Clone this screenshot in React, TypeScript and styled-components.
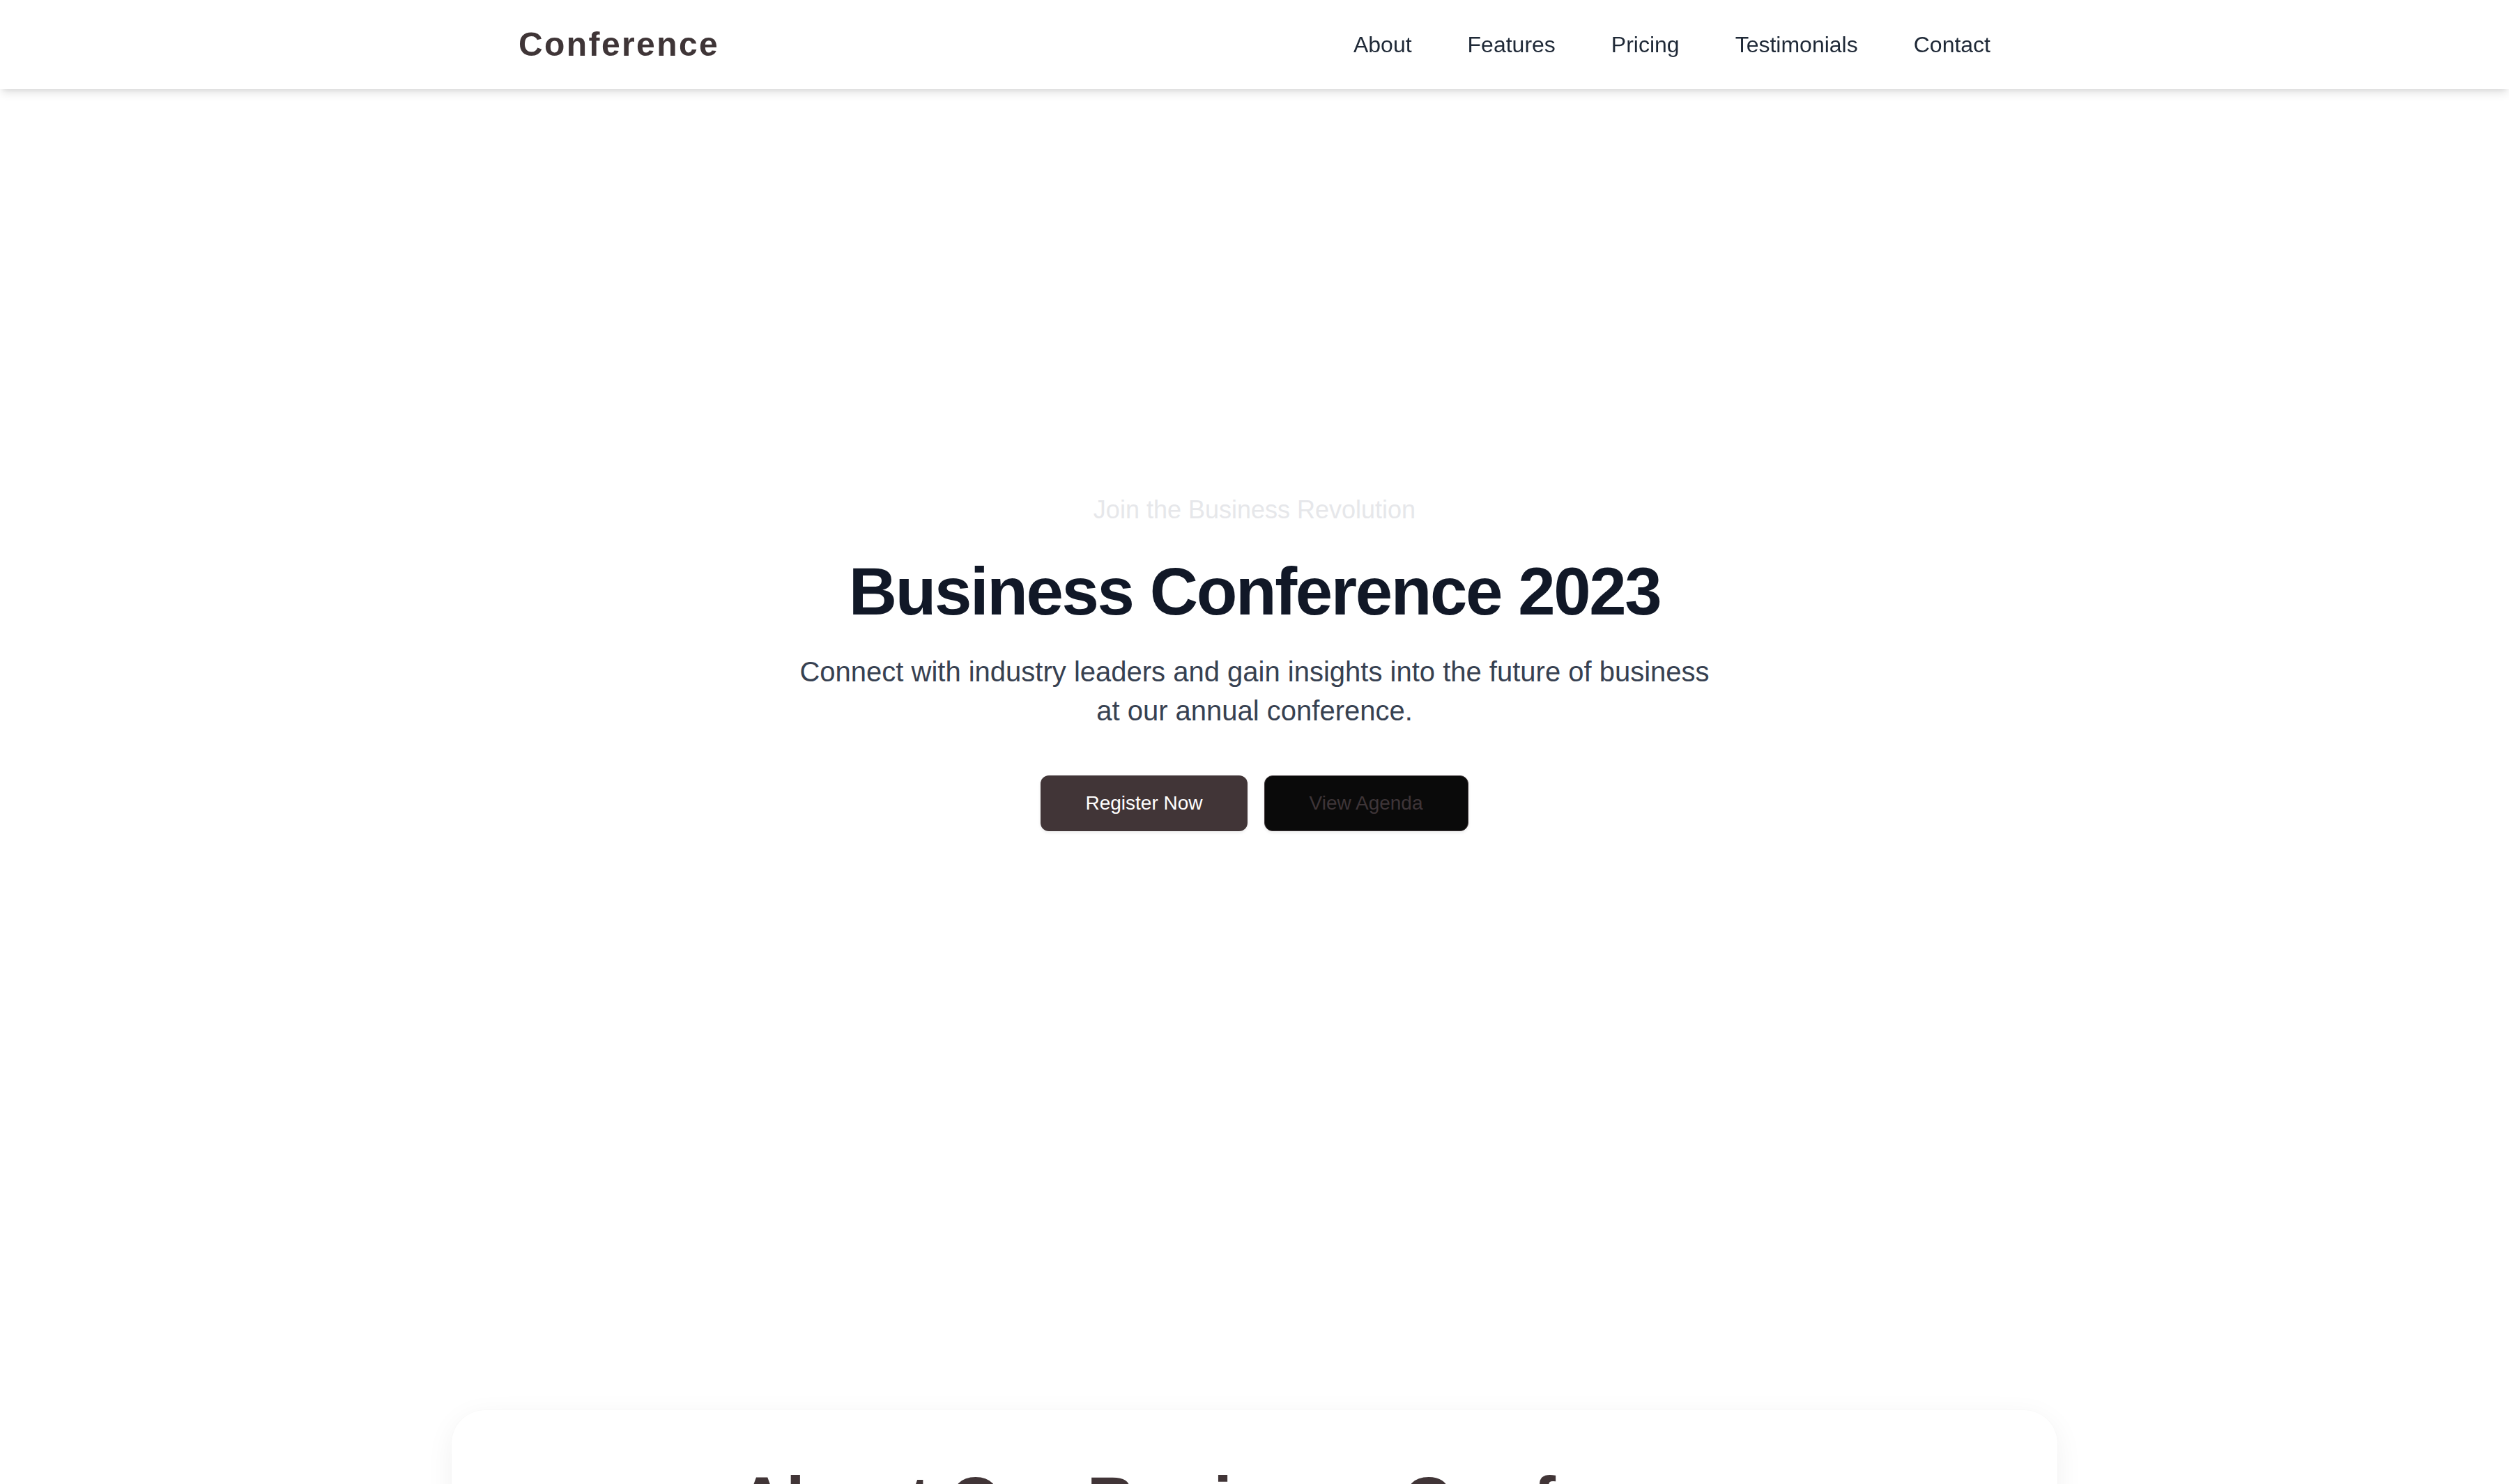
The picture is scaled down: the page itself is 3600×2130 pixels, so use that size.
import React from "react";
import styled, { createGlobalStyle } from "styled-components";

const GlobalStyle = createGlobalStyle`
  *, *::before, *::after { box-sizing: border-box; }
  html, body { margin: 0; padding: 0; background: #ffffff; }
  body {
    font-family: "Liberation Sans", Arial, Helvetica, sans-serif;
    color: #1f2937;
    -webkit-font-smoothing: antialiased;
  }
`;

const NavBar = styled.header`
  position: fixed;
  top: 0;
  left: 0;
  right: 0;
  z-index: 10;
  height: 128px;
  background: #ffffff;
  box-shadow: 0 8px 12px -2px rgba(0, 0, 0, 0.1), 0 4px 8px -4px rgba(0, 0, 0, 0.1);
`;

const NavInner = styled.div`
  max-width: 2304px;
  height: 100%;
  margin: 0 auto;
  padding: 0 96px;
  display: flex;
  align-items: center;
  justify-content: space-between;
`;

const Logo = styled.a`
  font-size: 48px;
  line-height: 64px;
  font-weight: 700;
  letter-spacing: 0.05em;
  color: #3f3537;
  text-decoration: none;
`;

const NavLinks = styled.nav`
  display: flex;
  align-items: center;
  gap: 80px;
`;

const NavLink = styled.a`
  font-size: 32px;
  line-height: 48px;
  color: #1f2937;
  text-decoration: none;
`;

const Hero = styled.section`
  min-height: 1896px;
  display: flex;
  align-items: center;
  justify-content: center;
  text-align: center;
`;

const HeroContent = styled.div`
  display: flex;
  flex-direction: column;
  align-items: center;
`;

const Eyebrow = styled.p`
  margin: 0 0 41px;
  font-size: 36px;
  line-height: 56px;
  color: #e6e7ea;
`;

const Title = styled.h1`
  margin: 0 0 39px;
  font-size: 96px;
  line-height: 96px;
  font-weight: 700;
  letter-spacing: -0.025em;
  color: #111827;
`;

const Lead = styled.p`
  margin: 0 0 65px;
  max-width: 1344px;
  font-size: 40px;
  line-height: 56px;
  color: #374151;
`;

const Actions = styled.div`
  display: flex;
  gap: 24px;
`;

const Button = styled.a<{ $variant: "primary" | "dark" }>`
  display: inline-flex;
  align-items: center;
  justify-content: center;
  height: 80px;
  padding: 0 64px;
  border-radius: 12px;
  font-size: 28px;
  line-height: 40px;
  text-decoration: none;
  background: ${(p) => (p.$variant === "primary" ? "#413537" : "#0a0a0a")};
  color: ${(p) => (p.$variant === "primary" ? "#ffffff" : "#3e3538")};
  border: ${(p) => (p.$variant === "primary" ? "none" : "1.5px solid #3f3639")};
  box-shadow: 0 2px 4px rgba(0, 0, 0, 0.08);
`;

const AboutSection = styled.section`
  padding: 128px 0 128px;
`;

const Card = styled.div`
  max-width: 2304px;
  margin: 0 auto;
  padding: 82px 96px 96px;
  background: #ffffff;
  border-radius: 48px;
  box-shadow: 0 10px 40px rgba(0, 0, 0, 0.06), 0 0 2px rgba(0, 0, 0, 0.03);
`;

const CardTitle = styled.h2`
  margin: 0 0 48px;
  font-size: 96px;
  line-height: 96px;
  font-weight: 700;
  text-align: center;
  color: #413537;
`;

const CardText = styled.p`
  margin: 0 auto;
  max-width: 1800px;
  font-size: 36px;
  line-height: 56px;
  text-align: center;
  color: #4b5563;
`;

const links = ["About", "Features", "Pricing", "Testimonials", "Contact"];

export default function App() {
  return (
    <>
      <GlobalStyle />
      <NavBar>
        <NavInner>
          <Logo href="#">Conference</Logo>
          <NavLinks>
            {links.map((l) => (
              <NavLink key={l} href={`#${l.toLowerCase()}`}>
                {l}
              </NavLink>
            ))}
          </NavLinks>
        </NavInner>
      </NavBar>
      <Hero>
        <HeroContent>
          <Eyebrow>Join the Business Revolution</Eyebrow>
          <Title>Business Conference 2023</Title>
          <Lead>
            Connect with industry leaders and gain insights into the future of business at our
            annual conference.
          </Lead>
          <Actions>
            <Button $variant="primary" href="#register">
              Register Now
            </Button>
            <Button $variant="dark" href="#agenda">
              View Agenda
            </Button>
          </Actions>
        </HeroContent>
      </Hero>
      <AboutSection id="about">
        <Card>
          <CardTitle>About Our Business Conference</CardTitle>
          <CardText>
            Our annual conference brings together executives, entrepreneurs and innovators to
            share ideas, build connections and shape the future of business.
          </CardText>
        </Card>
      </AboutSection>
    </>
  );
}
